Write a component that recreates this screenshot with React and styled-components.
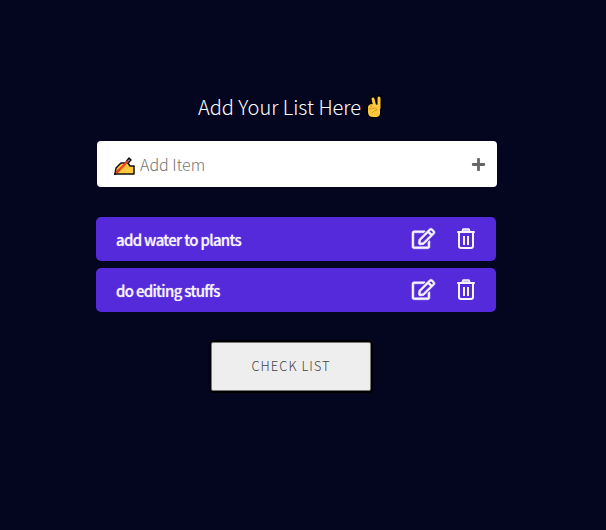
import React, { useState } from "react";
import styled, { createGlobalStyle } from "styled-components";
import { FaPlus, FaRegEdit } from "react-icons/fa";

const GlobalStyle = createGlobalStyle`
  * { box-sizing: border-box; }
  body {
    margin: 0;
    background: #040620;
    font-family: "Noto Sans CJK SC", "Open Sans", sans-serif;
    font-weight: 300;
  }
`;

const Page = styled.main`
  display: flex;
  justify-content: center;
  min-height: 100vh;
  padding: 91px 24px 40px 10px;
`;

const Panel = styled.div`
  width: 100%;
  max-width: 400px;
`;

const Title = styled.h1`
  display: flex;
  align-items: center;
  justify-content: center;
  gap: 5px;
  margin: 0 10px 19px 0;
  color: #fff;
  font-size: 20px;
  font-weight: 300;
  line-height: 31px;
`;

const AddForm = styled.form`
  display: flex;
  align-items: center;
  height: 46px;
  margin: 0 -1px 30px 1px;
  padding: 0 11px 0 17px;
  border-radius: 4px;
  background: #fff;
`;

const TextField = styled.input`
  flex: 1;
  min-width: 0;
  height: 100%;
  padding: 0 5px;
  border: 0;
  outline: 0;
  background: transparent;
  color: #333;
  font: inherit;
  font-size: 16px;
  &::placeholder { color: #757575; opacity: 1; }
`;

const IconButton = styled.button`
  display: flex;
  align-items: center;
  justify-content: center;
  padding: 0;
  border: 0;
  background: none;
  color: ${(p) => p.$color};
  font-size: ${(p) => p.$size};
  cursor: pointer;
  svg { overflow: visible; }
`;

const List = styled.ul`
  display: grid;
  gap: 7px;
  margin: 0 0 30px;
  padding: 0;
  list-style: none;
`;

const Item = styled.li`
  display: flex;
  align-items: center;
  justify-content: space-between;
  height: 44px;
  padding: 0 21px 0 20px;
  border-radius: 5px;
  background: #542adb;
  color: #f6f2ff;
  font-size: 15px;
  font-weight: 500;
  letter-spacing: -0.7px;
`;

const ItemText = styled.span`
  text-shadow: 0 0 1px rgba(246, 242, 255, 0.7);
`;

const Actions = styled.div`
  display: flex;
  align-items: center;
  gap: 22px;
  padding-bottom: 1px;
`;

const Footer = styled.div`
  display: flex;
  justify-content: center;
  padding-right: 10px;
`;

const CheckButton = styled.button`
  height: 49px;
  padding: 0 39px 2px;
  border: 1px solid #777;
  border-radius: 2px;
  box-shadow: 0 0 0 2px #000;
  background: #eee;
  color: #444;
  font: inherit;
  font-size: 13px;
  letter-spacing: 1px;
  text-transform: uppercase;
`;

const VictoryHand = () => (
  <svg width="18" height="24" viewBox="0 0 18 24" role="img" aria-label="Victory hand">
    <g fill="none" stroke="#000" strokeLinecap="round" strokeLinejoin="round">
      <path d="M7 4l2 8M13 3v10" strokeWidth="6" />
      <path d="M2 11 5 9h8l1 3v6l-3 4H6l-4-4z" strokeWidth="3" />
    </g>
    <path d="M7 4l2 8M13 3v10" fill="none" stroke="#ffc83d" strokeWidth="3" strokeLinecap="round" />
    <path d="M2 12q0-2 3-3l9 1v8q0 4-4 4H7q-5 0-5-5z" fill="#ffc83d" />
    <path d="M5 10v3M3 14q3 1 5-1 3 0 3 2l-3 1-2 2" fill="none" stroke="#d99a20" strokeLinecap="round" />
  </svg>
);

const WritingHand = () => (
  <svg width="21" height="24" viewBox="0 -4 21 24" role="img" aria-label="Writing hand">
    <path d="M1 18 2 12l5-5h7l2 3h4v8z" fill="#ffc83d" stroke="#111" strokeWidth="1.5" strokeLinejoin="round" />
    <path d="M4 15l6-5" fill="none" stroke="#f39a20" strokeWidth="3" strokeLinecap="round" />
    <path d="M12 6 15 2l2 2-3 3" fill="#aaa" stroke="#111" strokeWidth="1.5" strokeLinejoin="round" />
    <path d="M1 18 5 14" stroke="#111" strokeWidth="2" strokeLinecap="round" />
    <path d="M2 17 14 5" stroke="#ee422b" strokeWidth="2" />
  </svg>
);

const TrashIcon = () => (
  <svg width="18" height="21" viewBox="0 0 18 21" aria-hidden="true" fill="none" stroke="currentColor">
    <path d="M5 4 6 1h6l1 3z" fill="#c9b9f5" strokeWidth="1.5" strokeLinejoin="round" />
    <path d="M1 4h16" strokeWidth="2" strokeLinecap="round" />
    <path d="M2 5v13q0 2 2 2h10q2 0 2-2V5" strokeWidth="2" />
    <path d="M7 8v9M11 8v9" strokeWidth="2" />
  </svg>
);

export default function App() {
  const [text, setText] = useState("");
  const [items, setItems] = useState(["add water to plants", "do editing stuffs"]);

  const add = (e) => {
    e.preventDefault();
    if (text.trim()) {
      setItems([...items, text.trim()]);
      setText("");
    }
  };

  const remove = (index) => setItems(items.filter((_, i) => i !== index));

  const edit = (index) => {
    setText(items[index]);
    remove(index);
  };

  return (
    <>
      <GlobalStyle />
      <Page>
        <Panel>
          <Title>Add Your List Here <VictoryHand /></Title>
          <AddForm onSubmit={add}>
            <WritingHand />
            <TextField aria-label="Add Item" placeholder="Add Item" value={text} onChange={(e) => setText(e.target.value)} />
            <IconButton type="submit" aria-label="Add" $color="#666" $size="15px"><FaPlus /></IconButton>
          </AddForm>
          <List>
            {items.map((item, i) => (
              <Item key={item}>
                <ItemText>{item}</ItemText>
                <Actions>
                  <IconButton type="button" aria-label="Edit" $color="#f6f2ff" $size="23px" onClick={() => edit(i)}><FaRegEdit strokeWidth={14} /></IconButton>
                  <IconButton type="button" aria-label="Delete" $color="#f6f2ff" $size="21px" onClick={() => remove(i)}><TrashIcon /></IconButton>
                </Actions>
              </Item>
            ))}
          </List>
          <Footer>
            <CheckButton type="button">Check List</CheckButton>
          </Footer>
        </Panel>
      </Page>
    </>
  );
}
